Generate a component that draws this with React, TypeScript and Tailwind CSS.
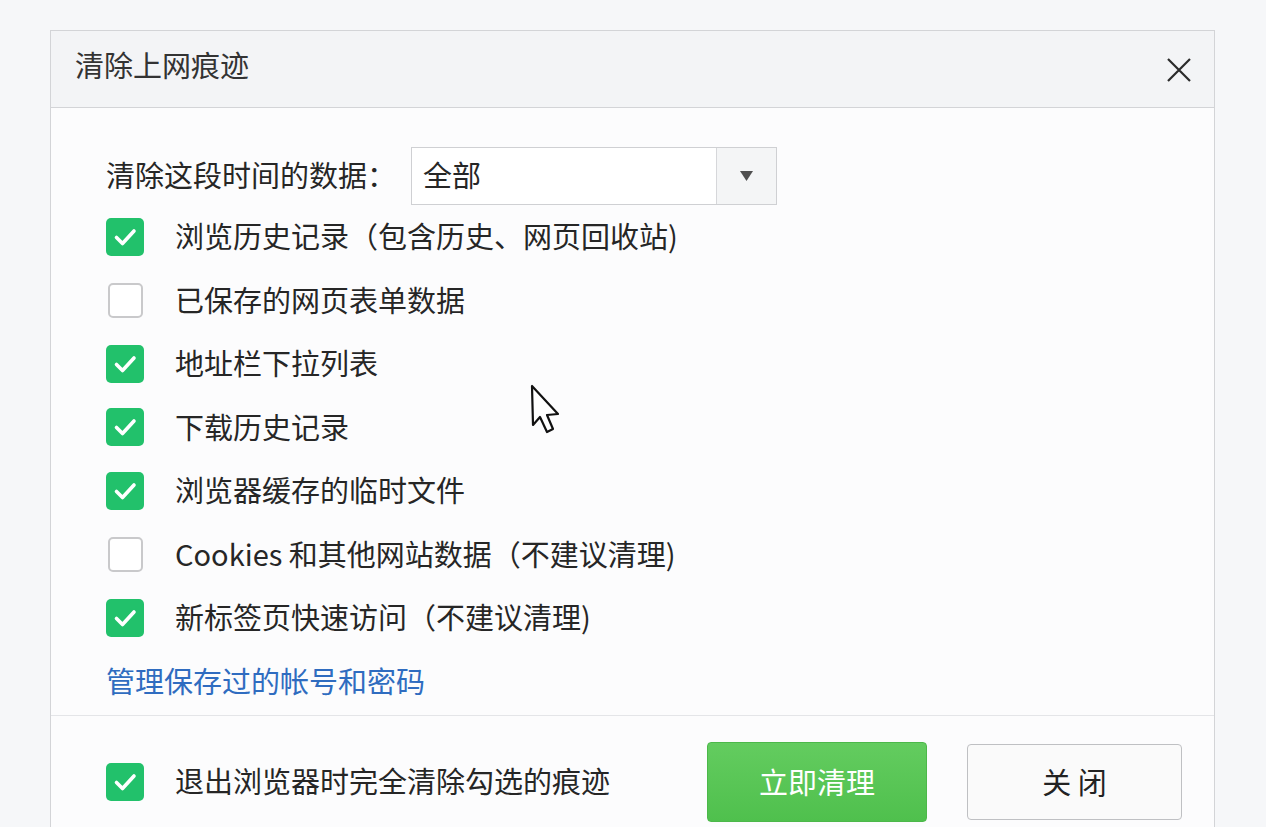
const rows = [
  { label: "浏览历史记录（包含历史、网页回收站)", checked: true },
  { label: "已保存的网页表单数据", checked: false },
  { label: "地址栏下拉列表", checked: true },
  { label: "下载历史记录", checked: true },
  { label: "浏览器缓存的临时文件", checked: true },
  { label: "Cookies 和其他网站数据（不建议清理)", checked: false },
  { label: "新标签页快速访问（不建议清理)", checked: true },
];

function CheckBox({ checked }: { checked: boolean }) {
  return (
    <div className="w-[38px] h-[38px] flex items-center justify-center shrink-0">
      {checked ? (
        <div className="w-[38px] h-[38px] rounded-[5px] bg-[#22c16b] flex items-center justify-center">
          <svg width="38" height="38" viewBox="0 0 38 38">
            <path
              d="M10.5 19.5 L16.5 25.5 L28 13"
              fill="none"
              stroke="#fff"
              strokeWidth="3.6"
              strokeLinecap="round"
              strokeLinejoin="round"
            />
          </svg>
        </div>
      ) : (
        <div className="w-[35px] h-[35px] rounded-[5px] border-2 border-[#c9c9cb] bg-white" />
      )}
    </div>
  );
}

export default function App() {
  return (
    <div className="relative h-[827px] overflow-hidden bg-[#f6f7f9] pt-[30px] pl-[50px] font-['Noto_Sans_CJK_SC',sans-serif] text-[#262626]">
      <div className="w-[1165px] border border-[#d3d4d7] bg-[#fcfcfd]">
        <div className="h-[77px] bg-[#f3f4f6] border-b border-[#d3d4d7] flex items-center justify-between pl-[24px] pr-[23px]">
          <h1 className="text-[29px] leading-none text-[#333] -mt-[9px]">清除上网痕迹</h1>
          <svg width="24" height="24" viewBox="0 0 24 24" className="mt-[2px]">
            <path d="M1 1 L23 23 M23 1 L1 23" stroke="#2b2b2b" strokeWidth="2.2" />
          </svg>
        </div>

        <div className="pl-[55px] pt-[39px]">
          <div className="flex items-center gap-[15px]">
            <span className="text-[29px] leading-none -mt-[4px]">清除这段时间的数据：</span>
            <div className="w-[366px] h-[58px] border border-[#cfd0d3] bg-white flex">
              <div className="flex-1 flex items-center pl-[11px] pb-[4px] text-[29px] leading-none">全部</div>
              <div className="w-[60px] border-l border-[#d6d7da] bg-[#f4f5f6] flex items-center justify-center">
                <svg width="13" height="10" viewBox="0 0 13 10">
                  <path d="M0 0 L13 0 L6.5 10 Z" fill="#505050" />
                </svg>
              </div>
            </div>
          </div>

          {rows.map((r) => (
            <div key={r.label} className="h-[63.5px] flex items-center gap-[31px]">
              <CheckBox checked={r.checked} />
              <span className="text-[29px] leading-none whitespace-nowrap -mt-[2px]">{r.label}</span>
            </div>
          ))}

          <div className="h-[65px] flex items-center">
            <a className="text-[29px] leading-none text-[#2f6cc0] -mt-[4px]">管理保存过的帐号和密码</a>
          </div>
        </div>

        <div className="border-t border-[#e4e5e8] pt-[26px] pb-[20px] pl-[55px] pr-[32px] flex items-center">
          <CheckBox checked />
          <span className="ml-[31px] text-[29px] leading-none -mt-[2px]">退出浏览器时完全清除勾选的痕迹</span>
          <div className="flex-1" />
          <button className="w-[220px] h-[80px] rounded-[4px] bg-gradient-to-b from-[#63cc5f] to-[#4fc04d] border border-[#4cb84a] text-white text-[29px] leading-none">
            立即清理
          </button>
          <button className="ml-[40px] w-[215px] h-[76px] rounded-[4px] bg-[#fafafa] border border-[#bfc0c3] text-[29px] leading-none text-[#222]">
            关 闭
          </button>
        </div>
      </div>

      <svg
        width="32"
        height="52"
        viewBox="0 0 32 52"
        className="absolute left-[529px] top-[384px]"
      >
        <path
          d="M3 2 L4 41 L11 33 L18 48 L24 45 L18 31 L29 30 Z"
          fill="#fff"
          stroke="#111"
          strokeWidth="2.2"
          strokeLinejoin="round"
        />
      </svg>
    </div>
  );
}
